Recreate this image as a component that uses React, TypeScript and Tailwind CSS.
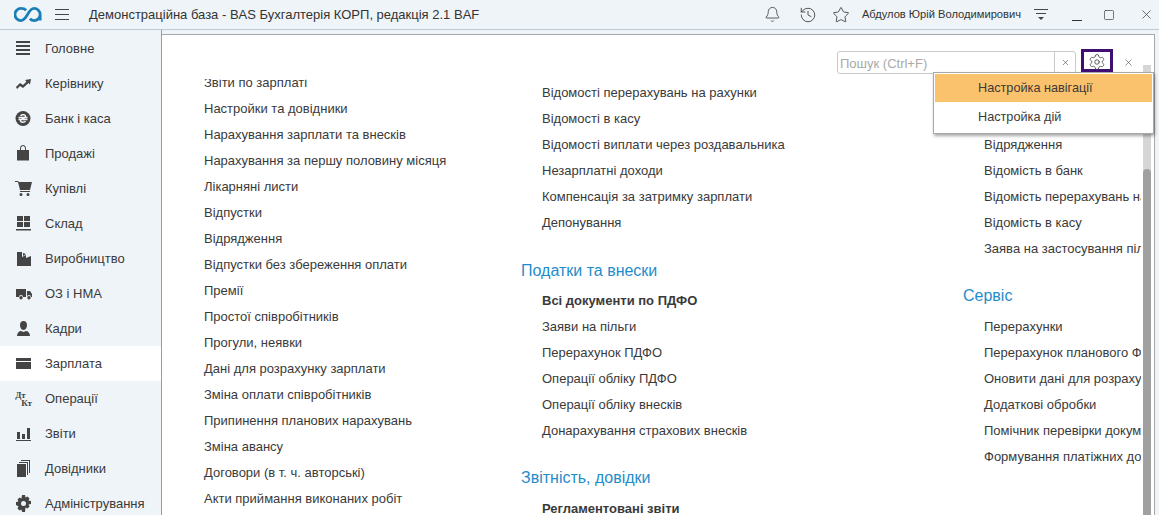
import { Bell, History, Star, Settings, X, Square } from 'lucide-react';

const sections = [
  { label: 'Головне', icon: 'main' },
  { label: 'Керівнику', icon: 'chart' },
  { label: 'Банк і каса', icon: 'bank' },
  { label: 'Продажі', icon: 'bag' },
  { label: 'Купівлі', icon: 'cart' },
  { label: 'Склад', icon: 'stock' },
  { label: 'Виробництво', icon: 'factory' },
  { label: 'ОЗ і НМА', icon: 'truck' },
  { label: 'Кадри', icon: 'person' },
  { label: 'Зарплата', icon: 'wallet' },
  { label: 'Операції', icon: 'dtkt' },
  { label: 'Звіти', icon: 'bars' },
  { label: 'Довідники', icon: 'books' },
  { label: 'Адміністрування', icon: 'gear' },
];

const col1 = [
  'Звіти по зарплаті', 'Настройки та довідники', 'Нарахування зарплати та внесків',
  'Нарахування за першу половину місяця', 'Лікарняні листи', 'Відпустки', 'Відрядження',
  'Відпустки без збереження оплати', 'Премії', 'Простої співробітників', 'Прогули, неявки',
  'Дані для розрахунку зарплати', 'Зміна оплати співробітників', 'Припинення планових нарахувань',
  'Зміна авансу', 'Договори (в т. ч. авторські)', 'Акти приймання виконаних робіт',
];

function SectionIcon({ name }: { name: string }) {
  const c = 'w-[17px] h-[17px] fill-[#444]';
  switch (name) {
    case 'main':
      return <svg viewBox="0 0 17 17" className={c}><path d="M1 1h14v2H1zM1 5h14v2H1zM1 9h14v2H1zM1 13h14v2H1z" /></svg>;
    case 'chart':
      return <svg viewBox="0 0 17 17" className={c}><path d="M1 12l4-4 3 2 3.500-3.500L10 5l6-1-1 5.500-1.500-1.500L8 13l-3-2-3 3z" /></svg>;
    case 'bank':
      return (
        <svg viewBox="0 0 17 17" className={c}>
          <circle cx="8" cy="8.500" r="7.500" />
          <path d="M5.500 5.800C6.500 4.300 10.500 4.300 10.500 6.500c0 2-5 2-5 4.200 0 2 4 2 5 .5M3.500 7.500h9M3.500 9.500h9" className="fill-none stroke-[#eff4f8] stroke-[1.400]" />
        </svg>
      );
    case 'bag':
      return <svg viewBox="0 0 17 17" className={c}><path fillRule="evenodd" d="M2 5h3V3.500C5 1.500 6.500 0 8 0s3 1.500 3 3.500V5h3v10.500H2zM6 5h4V3.500C10 2.200 9 1 8 1S6 2.200 6 3.500z" /></svg>;
    case 'cart':
      return <svg viewBox="0 0 17 17" className={c}><path d="M0 1h3l1 1h13l-2 8H5L3 2H0zM5 11h10v1H5zM6 13a1.500 1.500 0 110 3 1.500 1.500 0 010-3zM13 13a1.500 1.500 0 110 3 1.500 1.500 0 010-3z" /></svg>;
    case 'stock':
      return <svg viewBox="0 0 17 17" className={c}><path d="M2 1h6v5H2zM9 1h6v5H9zM2 7h6v5H2zM9 7h6v5H9zM1 14h15v1.500H1z" /></svg>;
    case 'factory':
      return <svg viewBox="0 0 17 17" className={c}><path d="M2 2h5v5l4-2v3l5-2v10H2zM8 3l3 1-3 2z" /></svg>;
    case 'truck':
      return <svg viewBox="0 0 17 17" className={c}><path d="M1 4h10v8H8a2 2 0 00-4 0H1zM12 6h3l2 3v3h-1a2 2 0 00-4 0zM6 11a1.700 1.700 0 110 3.400A1.700 1.700 0 016 11zM14 11a1.700 1.700 0 110 3.400 1.700 1.700 0 010-3.400z" /></svg>;
    case 'person':
      return <svg viewBox="0 0 17 17" className={c}><path d="M8.500 1C11 1 12 3 12 5c0 2-1 5-3.500 5S5 7 5 5c0-2 1-4 3.500-4zM2 16c0-3 2-5 4-5l2.500 1 2.500-1c2 0 4 2 4 5z" /></svg>;
    case 'wallet':
      return <svg viewBox="0 0 17 17" className={c}><path d="M1 3h15v3H1zM1 7h15v7H1z" /></svg>;
    case 'bars':
      return <svg viewBox="0 0 17 17" className={c}><path d="M2 7h3v7H2zM7 9h3v5H7zM12 3h3v11h-3zM1 15h15v1H1z" /></svg>;
    case 'books':
      return <svg viewBox="0 0 17 17" className={c}><path d="M2 4h9v13H2zM4 2h9v13h-1V3H4zM6 0h9v13h-1V1H6z" /></svg>;
    case 'gear':
      return <svg viewBox="0 0 17 17" className={c}><path fillRule="evenodd" d="M7 0h3l.5 2.500 2-1 2 2-1 2 2.500.5v3l-2.500.5 1 2-2 2-2-1L10 17H7l-.5-2.500-2 1-2-2 1-2L1 10V7l2.500-.5-1-2 2-2 2 1zM8.500 6a2.500 2.500 0 100 5 2.500 2.500 0 000-5z" /></svg>;
    default:
      return null;
  }
}

function Item({ text, bold }: { text: string; bold?: boolean }) {
  return <div className={`h-[26px] leading-[26px] whitespace-nowrap ${bold ? 'font-bold' : ''}`}>{text}</div>;
}

function Heading({ text, className }: { text: string; className?: string }) {
  return <div className={`text-[16px] leading-[26px] text-[#1f8ccb] -ml-[21px] whitespace-nowrap ${className ?? ''}`}>{text}</div>;
}

export default function App() {
  return (
    <div className="w-[1159px] h-[515px] overflow-hidden flex flex-col bg-white text-[#3a3a3a] text-[13px] font-['Liberation_Sans',Arial,sans-serif]">
      <header className="h-[30px] shrink-0 flex items-center bg-[#eff4f8] border-b border-[#bccbd3]">
        <svg viewBox="0 0 30 16" className="w-[28px] h-[15px] ml-[14px] fill-none stroke-[#1a7fb8] stroke-[3]">
          <path d="M13 3.500C11 1.500 9 1.500 7.500 1.500a6.500 6.500 0 000 13c3 0 5-3 7-6.500s4-6.500 7-6.500a6.500 6.500 0 016.500 6.500v6.500M28 8a6.500 6.500 0 01-6.500 6.500c-2 0-3.500-1-4.500-2" />
        </svg>
        <div className="ml-[13px] w-[14px] flex flex-col gap-[4px]">
          <div className="h-px bg-[#444]" />
          <div className="h-px bg-[#444]" />
          <div className="h-px bg-[#444]" />
        </div>
        <div className="ml-[20px] text-[#333]">Демонстраційна база - BAS Бухгалтерія КОРП, редакція 2.1 BAF</div>
        <div className="ml-auto flex items-center text-[#333]">
          <Bell size={17} strokeWidth={1.100} />
          <History size={18} strokeWidth={1.100} className="ml-[18px]" />
          <Star size={18} strokeWidth={1.100} className="ml-[15px]" />
          <span className="ml-[12px] text-[11.150px]">Абдулов Юрій Володимирович</span>
          <div className="ml-[13px] w-[14px] flex flex-col items-center gap-[3px]">
            <div className="h-px w-[14px] bg-[#444]" />
            <div className="h-px w-[10px] bg-[#444]" />
            <div className="w-0 h-0 border-x-[3px] border-x-transparent border-t-[3px] border-t-[#444]" />
          </div>
          <div className="ml-[24px] w-[10px] h-px bg-[#333] translate-y-[6px]" />
          <Square size={12} strokeWidth={1.300} className="ml-[21px]" />
          <X size={15} strokeWidth={1.100} className="ml-[24px] mr-[5px]" />
        </div>
      </header>
      <div className="flex-1 flex min-h-0">
        <nav className="w-[162px] shrink-0 bg-[#eff4f8] border-r border-[#9a9a9a] pt-px">
          {sections.map((s) => (
            <div key={s.label} className={`h-[35px] flex items-center pl-[15px] ${s.label === 'Зарплата' ? 'bg-white' : ''}`}>
              <div className="w-[17px] h-[17px] flex items-center justify-center">
                {s.icon === 'dtkt' ? (
                  <div className="font-bold text-[9px] leading-[8px] text-[#444] font-['Liberation_Serif',serif]">
                    <div>Дт</div>
                    <div className="pl-[6px]">Кт</div>
                  </div>
                ) : (
                  <SectionIcon name={s.icon} />
                )}
              </div>
              <span className="ml-[13px]">{s.label}</span>
            </div>
          ))}
        </nav>
        <main className="relative flex-1 min-w-0 flex flex-col overflow-hidden">
          <div className="h-[4px] shrink-0 bg-[#eff4f8] border-b border-[#a8a8a8] box-content" />
          <div className="h-[44px] shrink-0" />
          <div className="flex-1 min-h-0 flex mr-[18px] overflow-hidden">
            <div className="ml-[42px] w-[338px] shrink-0 -mt-[9px]">
              {col1.map((t) => <Item key={t} text={t} />)}
            </div>
            <div className="w-[442px] shrink-0 mt-[1px]">
              <Item text="Відомості перерахувань на рахунки" />
              <Item text="Відомості в касу" />
              <Item text="Відомості виплати через роздавальника" />
              <Item text="Незарплатні доходи" />
              <Item text="Компенсація за затримку зарплати" />
              <Item text="Депонування" />
              <Heading text="Податки та внески" className="mt-[22px]" />
              <div className="h-[4px]" />
              <Item text="Всі документи по ПДФО" bold />
              <Item text="Заяви на пільги" />
              <Item text="Перерахунок ПДФО" />
              <Item text="Операції обліку ПДФО" />
              <Item text="Операції обліку внесків" />
              <Item text="Донарахування страхових внесків" />
              <Heading text="Звітність, довідки" className="mt-[21px]" />
              <div className="h-[5px]" />
              <Item text="Регламентовані звіти" bold />
            </div>
            <div className="shrink-0 mt-[53px]">
              <Item text="Відрядження" />
              <Item text="Відомість в банк" />
              <Item text="Відомість перерахувань на рахунки" />
              <Item text="Відомість в касу" />
              <Item text="Заява на застосування пільги" />
              <Heading text="Сервіс" className="mt-[21px]" />
              <div className="h-[5px]" />
              <Item text="Перерахунки" />
              <Item text="Перерахунок планового ФОП" />
              <Item text="Оновити дані для розрахунку" />
              <Item text="Додаткові обробки" />
              <Item text="Помічник перевірки документів" />
              <Item text="Формування платіжних документів" />
            </div>
          </div>
          <div className="absolute right-[8px] top-[35px] bottom-0 w-[8px] bg-[#d6d6d6]">
            <div className="absolute left-0 top-[104px] bottom-0 w-[8px] rounded-t bg-[#a0a0a0]" />
          </div>
          <div className="absolute right-[4px] top-[4px] bottom-0 w-px bg-[#a8a8a8]" />
          <div className="absolute right-0 top-0 bottom-0 w-[4px] bg-[#eff4f8]" />
          <div className="absolute right-[15px] top-[19px] flex items-start">
            <div className="mt-[2px] w-[239px] h-[23px] flex border border-[#c9c9c9] rounded-[3px] bg-white">
              <div className="flex-1 pl-[2px] leading-[23px] text-[#a9a9a9]">Пошук (Ctrl+F)</div>
              <div className="w-[21px] border-l border-[#c9c9c9] flex items-center justify-center"><X size={9} strokeWidth={1.500} /></div>
            </div>
            <div className="ml-[5px] w-[32px] h-[23px] border-[3px] border-[#3f0f74] flex items-center justify-center">
              <Settings size={18} strokeWidth={1.100} className="text-[#444] translate-y-[1px]" />
            </div>
            <div className="w-[31px] h-[26px] flex items-center justify-center"><X size={11} strokeWidth={1.200} /></div>
          </div>
          <div className="absolute left-[771px] top-[42px] w-[221px] h-[62px] bg-white border border-[#a8a8a8] shadow-[1px_2px_3px_rgba(0,0,0,0.35)] p-px">
            <div className="h-[28px] leading-[28px] pl-[43px] bg-[#fbc26d] text-[12.700px]">Настройка навігації</div>
            <div className="h-[30px] leading-[30px] pl-[43px] text-[12.700px]">Настройка дій</div>
          </div>
        </main>
      </div>
    </div>
  );
}
